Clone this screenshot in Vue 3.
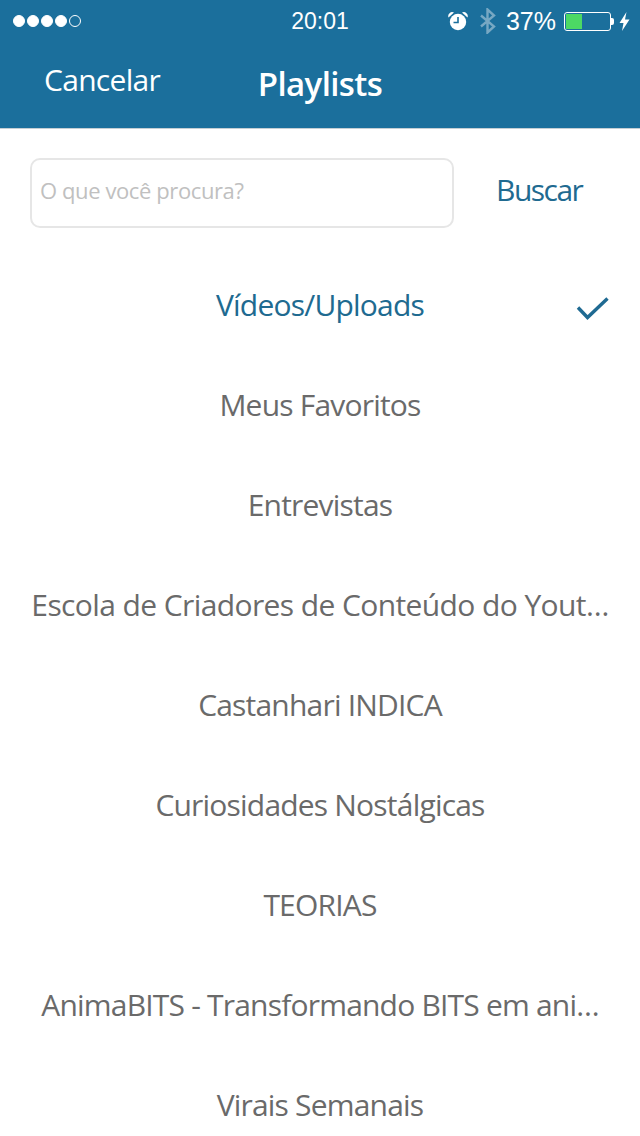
<template>
  <div class="screen">
    <header class="header">
      <div class="status">
        <div class="signal">
          <span v-for="n in 4" :key="n" class="dot"></span>
          <span class="dot empty"></span>
        </div>
        <div class="time">20:01</div>
        <div class="status-right">
          <svg class="alarm" width="20" height="20" viewBox="0 0 20 20">
            <circle cx="10" cy="11" r="8.2" fill="#fff" />
            <path d="M10 6v5.5H5.5" fill="none" stroke="#1b6f9c" stroke-width="1.6" />
            <path d="M0.5 6.5a4 4 0 0 1 5.5-5zM19.5 6.5a4 4 0 0 0-5.5-5z" fill="#fff" />
          </svg>
          <svg class="bt" width="17" height="26" viewBox="0 0 17 26">
            <path d="M2 7.5l13 11-6.5 6V1.5l6.500 6L2 18.500" fill="none" stroke="#77a8c3" stroke-width="2.4" />
          </svg>
          <span class="pct">37%</span>
          <div class="battery">
            <div class="battery-fill" :style="{ width: '37%' }"></div>
          </div>
          <div class="battery-tip"></div>
          <svg class="bolt" width="11" height="19" viewBox="0 0 11 19">
            <path d="M7.500 0L0.500 11H4.500L3 19L10.500 7.500H6z" fill="#fff" />
          </svg>
        </div>
      </div>
      <div class="nav">
        <span class="cancel">Cancelar</span>
        <span class="title">Playlists</span>
      </div>
    </header>

    <div class="search">
      <div class="search-box"><span class="placeholder">O que você procura?</span></div>
      <span class="search-btn">Buscar</span>
    </div>

    <ul class="list">
      <li
        v-for="(item, index) in playlists"
        :key="item"
        class="row"
        :class="{ active: index === 0, wide: index === 3 }"
      >
        <span class="row-label">{{ item }}</span>
        <svg v-if="index === 0" class="check" width="34" height="24" viewBox="0 0 34 24">
          <path d="M2 11.500L11.500 21.500L31.500 2.500" fill="none" stroke="#1f6a92" stroke-width="3.400" />
        </svg>
      </li>
    </ul>
  </div>
</template>

<script setup>
const playlists = [
  'Vídeos/Uploads',
  'Meus Favoritos',
  'Entrevistas',
  'Escola de Criadores de Conteúdo do Yout…',
  'Castanhari INDICA',
  'Curiosidades Nostálgicas',
  'TEORIAS',
  'AnimaBITS - Transformando BITS em ani…',
  'Virais Semanais'
]
</script>

<style>
html, body {
  margin: 0;
  background: #fff;
}
</style>

<style scoped>
.screen {
  width: 640px;
  height: 1136px;
  overflow: hidden;
  background: #fff;
  font-family: 'Open Sans', sans-serif;
}

.header {
  height: 128px;
  background: #1b6f9c;
  border-bottom: 1px solid #c4ced4;
  color: #fff;
}

.status {
  height: 42px;
  display: flex;
  align-items: center;
  position: relative;
  padding: 0 10px 0 13px;
  font-family: 'Liberation Sans', sans-serif;
}

.signal {
  display: flex;
  gap: 2px;
}

.dot {
  width: 12px;
  height: 12px;
  border-radius: 50%;
  background: #fff;
  border: 1px solid #fff;
  box-sizing: border-box;
}

.dot.empty {
  background: none;
}

.time {
  position: absolute;
  left: 0;
  right: 0;
  text-align: center;
  font-size: 23px;
  pointer-events: none;
}

.status-right {
  margin-left: auto;
  display: flex;
  align-items: center;
}

.alarm {
  margin-right: 11px;
}

.bt {
  margin-right: 10px;
}

.pct {
  font-size: 25px;
  margin-right: 8px;
}

.battery {
  width: 47px;
  height: 19px;
  box-sizing: border-box;
  border: 1px solid #fff;
  border-radius: 3px;
  padding: 1px;
  display: flex;
}

.battery-fill {
  background: #4cd964;
}

.battery-tip {
  width: 3px;
  height: 7px;
  background: #fff;
  border-radius: 0 2px 2px 0;
  margin-right: 5px;
}

.nav {
  height: 86px;
  position: relative;
  display: flex;
  align-items: center;
  padding: 0 0 12px 44px;
  box-sizing: border-box;
}

.cancel {
  font-size: 30px;
  letter-spacing: -0.7px;
}

.title {
  position: absolute;
  left: 0;
  right: 0;
  top: 19px;
  text-align: center;
  font-size: 33px;
  font-weight: 600;
  letter-spacing: -0.6px;
}

.search {
  display: flex;
  align-items: center;
  padding: 29px 0 0 30px;
}

.search-box {
  width: 424px;
  height: 70px;
  box-sizing: border-box;
  border: 2px solid #e6e6e6;
  border-radius: 10px;
  padding: 0 8px 6px;
  display: flex;
  align-items: center;
  font-size: 22px;
  letter-spacing: -0.4px;
  color: #c0c0c0;
}

.search-btn {
  margin: 0 0 8px 42px;
  font-size: 30px;
  letter-spacing: -1.5px;
  color: #206a90;
}

.list {
  list-style: none;
  margin: 0;
  padding: 30px 0 0;
}

.row {
  height: 100px;
  box-sizing: border-box;
  position: relative;
  display: flex;
  align-items: center;
  justify-content: center;
  padding: 0 20px 8px;
  font-size: 30px;
  letter-spacing: -0.8px;
  color: #6a6a6a;
}

.row-label {
  white-space: nowrap;
}

.row.active {
  color: #206a90;
}

.row.wide {
  letter-spacing: -0.6px;
}

.check {
  position: absolute;
  right: 30px;
  top: 38px;
}
</style>
